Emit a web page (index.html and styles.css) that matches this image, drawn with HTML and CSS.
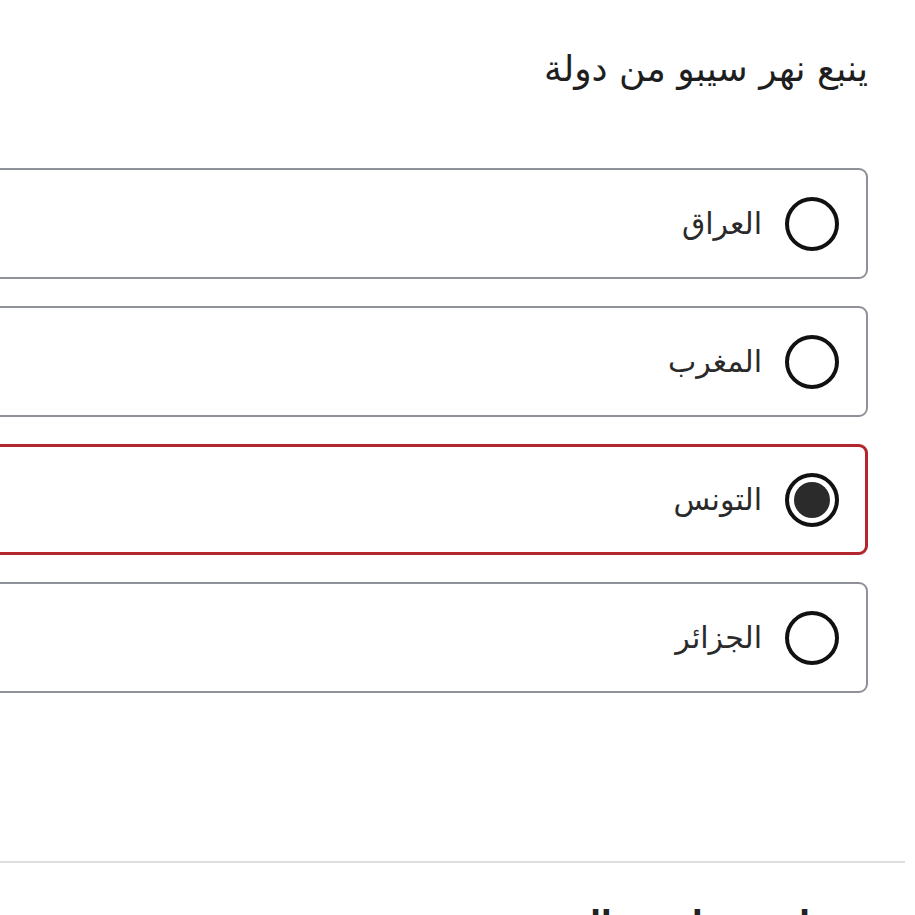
FILE: index.html
```html
<!DOCTYPE html>
<html lang="ar" dir="rtl">
<head>
<meta charset="utf-8">
<link rel="stylesheet" href="styles.css">
</head>
<body>
<div class="page">
  <section class="question">
    <h2 class="q-title">ينبع نهر سيبو من دولة</h2>
    <div class="options">
      <label class="option"><span class="radio"></span><span class="label">العراق</span></label>
      <label class="option"><span class="radio"></span><span class="label">المغرب</span></label>
      <label class="option selected"><span class="radio checked"><span class="dot"></span></span><span class="label">التونس</span></label>
      <label class="option"><span class="radio"></span><span class="label">الجزائر</span></label>
    </div>
  </section>
  <hr class="divider">
  <h2 class="next-title">ما هي عاصمة المغرب</h2>
</div>
</body>
</html>
```
FILE: styles.css
```css
html, body {
  margin: 0;
  padding: 0;
  background: #fff;
}
body {
  font-family: "DejaVu Sans", "Noto Sans", sans-serif;
  color: #222;
  overflow: hidden;
  height: 915px;
}
.page {
  width: 915px;
  height: 915px;
  overflow: hidden;
}
.question {
  padding-right: 47px;
  margin-left: -30px;
}
.q-title {
  margin: 0;
  padding-top: 46px;
  font-size: 36px;
  font-weight: normal;
  line-height: 46px;
  color: #1e1e1e;
}
.options {
  display: flex;
  flex-direction: column;
  gap: 27px;
  margin-top: 76px;
}
.option {
  display: flex;
  align-items: center;
  height: 111px;
  box-sizing: border-box;
  border: 2px solid #8f9199;
  border-radius: 9px;
  padding-right: 27px;
  gap: 23px;
}
.option.selected {
  border: 3px solid #b3262b;
  padding-right: 26px;
}
.radio {
  width: 54px;
  height: 54px;
  box-sizing: border-box;
  border: 4px solid #111;
  border-radius: 50%;
  display: flex;
  align-items: center;
  justify-content: center;
  flex: none;
}
.radio .dot {
  width: 36px;
  height: 36px;
  border-radius: 50%;
  background: #2b2b2b;
}
.label {
  font-size: 30px;
  color: #2a2a2a;
  line-height: 40px;
}
.divider {
  margin: 168px 10px 0 0;
  border: none;
  border-top: 2px solid #dedede;
  width: 905px;
}
.next-title {
  margin: 0;
  padding-right: 85px;
  padding-top: 36px;
  font-size: 31px;
  font-weight: bold;
  line-height: 46px;
}
```
